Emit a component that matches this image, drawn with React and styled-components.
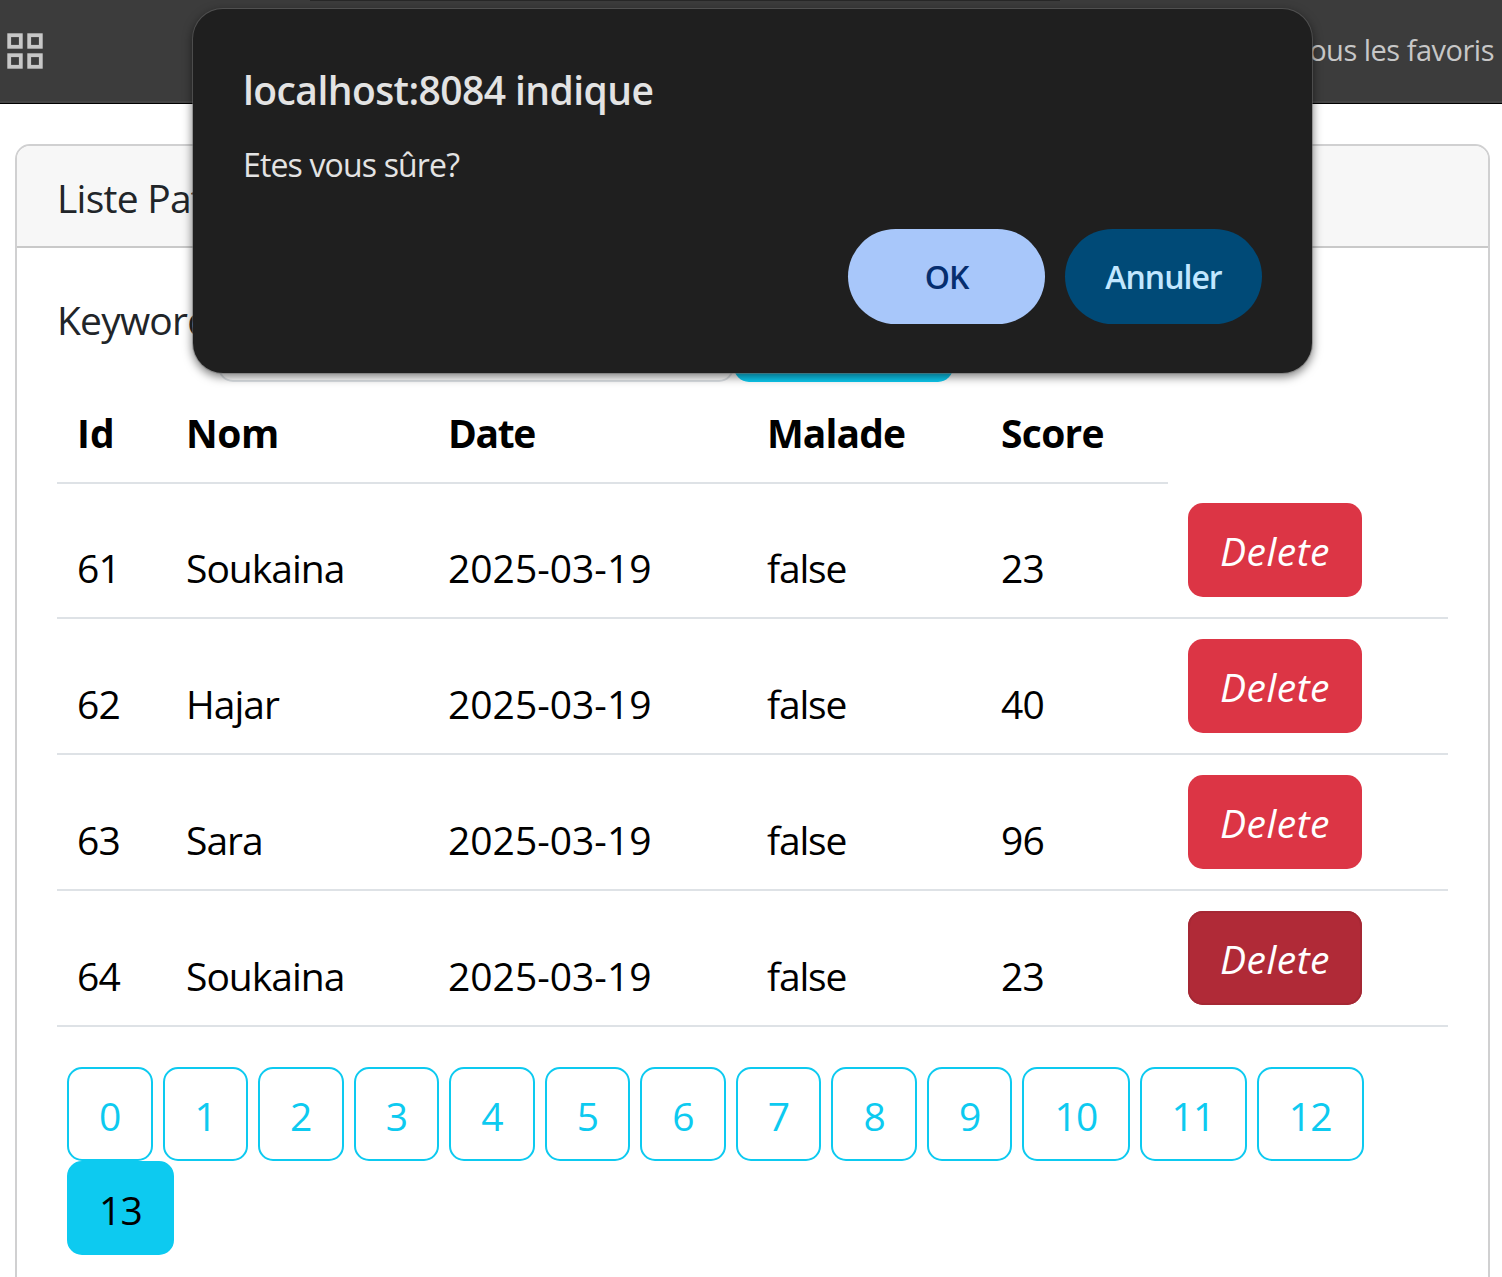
import React from 'react';
import styled, { createGlobalStyle, css } from 'styled-components';

const GlobalStyle = createGlobalStyle`
  * { box-sizing: border-box; }
  body {
    margin: 0;
    background: #fff;
    color: #212529;
    font: 400 39px/60px 'Open Sans', 'Noto Sans', sans-serif;
    overflow: hidden;
  }
`;

const Screen = styled.div`
  position: relative;
  height: 1277px;
  overflow: hidden;
  display: flex;
  flex-direction: column;
`;

const BookmarksBar = styled.header`
  position: relative;
  flex: none;
  height: 104px;
  padding: 0 8px 0 7px;
  display: flex;
  align-items: center;
  justify-content: space-between;
  background: #3c3c3c;
  border-bottom: 1px solid #000;
  box-shadow: inset 0 -2px #454545;
  color: #c7c7c7;
  font-size: 29px;
`;

const AddressBarEdge = styled.div`
  position: absolute;
  left: 310px;
  top: 0;
  width: 750px;
  height: 1px;
  background: #282828;
`;

const BookmarksLabel = styled.span`
  letter-spacing: -0.5px;
  padding-bottom: 3px;
`;

const Card = styled.main`
  flex: none;
  margin: 40px 12px 0 15px;
  height: 1200px;
  border: 2px solid #d0d0d1;
  border-radius: 15px;
  overflow: hidden;
`;

const CardHeader = styled.div`
  height: 102px;
  padding: 22px 40px 18px;
  background: #f7f7f7;
  border-bottom: 2px solid #c9c9c9;
  letter-spacing: -0.75px;
`;

const CardBody = styled.div`
  padding: 40px 40px;
`;

const SearchForm = styled.form`
  display: flex;
  height: 94px;
  margin-bottom: 2px;
`;

const SearchLabel = styled.label`
  width: 161px;
  padding-top: 2px;
  white-space: nowrap;
  letter-spacing: -0.8px;
`;

const SearchInput = styled.input`
  width: 516px;
  height: 94px;
  border: 2px solid #dee2e6;
  border-radius: 15px;
`;

const SearchButton = styled.button`
  width: 219px;
  height: 94px;
  border: 0;
  border-radius: 15px;
  background: #0dcaf0;
`;

const Table = styled.table`
  width: 1391px;
  table-layout: fixed;
  border-collapse: separate;
  border-spacing: 0;
  color: #000;
`;

const Col = styled.col`
  width: ${(p) => p.$width}px;
`;

const HeadCell = styled.th`
  height: 100px;
  padding: 1px 20px 1px;
  text-align: left;
  font-weight: 700;
  letter-spacing: ${(p) => p.$spacing || 0}px;
  border-bottom: 2px solid #dee2e6;
`;

const Row = styled.tr`
  height: 136px;
  &:first-child { height: 135px; }
`;

const Cell = styled.td`
  padding: 0 20px 19px;
  vertical-align: bottom;
  letter-spacing: ${(p) => p.$spacing || 0}px;
  border-bottom: 2px solid #dee2e6;
`;

const ActionCell = styled(Cell)`
  padding: 0 20px 20px;
`;

const DeleteButton = styled.button`
  display: block;
  width: 174px;
  height: 94px;
  padding: 2px 0 0;
  border: 0;
  border-radius: 15px;
  background: #dc3545;
  color: #fff;
  font: italic 400 39px/60px 'Open Sans', 'Noto Sans', sans-serif;
  letter-spacing: 0.5px;
  ${(p) => p.$pressed && css`
    background: #b02a37;
    box-shadow: inset 0 0 0 2px #a52834;
  `}
`;

const Pager = styled.nav`
  display: flex;
  flex-wrap: wrap;
  margin-top: 40px;
  padding-left: 10px;
  column-gap: 10px;
`;

const PageButton = styled.button`
  width: ${(p) => (p.$wide ? 107.1 : 85.55)}px;
  height: 94px;
  padding: 3px 0 0;
  border: 2px solid #0dcaf0;
  border-radius: 15px;
  background: ${(p) => (p.$active ? '#0dcaf0' : 'transparent')};
  color: ${(p) => (p.$active ? '#000' : '#0dcaf0')};
  font: 400 39px/60px 'Open Sans', 'Noto Sans', sans-serif;
  letter-spacing: -0.8px;
`;

const Dialog = styled.div`
  position: absolute;
  left: 193px;
  top: 9px;
  width: 1119px;
  height: 364px;
  padding: 51px 50px 49px;
  display: flex;
  flex-direction: column;
  background: #1f1f1f;
  border-radius: 30px;
  box-shadow: 0 0 0 1px rgba(110, 110, 110, 0.5), 0 3px 10px 1px rgba(0, 0, 0, 0.5);
  color: #e3e3e3;
`;

const DialogTitle = styled.div`
  font-weight: 600;
  font-size: 39px;
  letter-spacing: -0.57px;
`;

const DialogText = styled.div`
  margin-top: 15px;
  font-size: 32px;
  letter-spacing: -0.85px;
`;

const DialogActions = styled.div`
  margin-top: auto;
  display: flex;
  justify-content: flex-end;
  gap: 20px;
`;

const DialogButton = styled.button`
  width: 197px;
  height: 95px;
  padding: 1px 0 1px;
  border: 0;
  border-radius: 48px;
  background: ${(p) => (p.$primary ? '#a8c7fa' : '#004a77')};
  color: ${(p) => (p.$primary ? '#062e6f' : '#c2e7ff')};
  font: 600 32px/60px 'Open Sans', 'Noto Sans', sans-serif;
  letter-spacing: -1px;
`;

const AppsIcon = () => (
  <svg width="37" height="37" viewBox="0 0 37 37" fill="none" stroke="#c7c7c7" strokeWidth="3.8">
    <rect x="2.2" y="2.2" width="11.6" height="11.6" />
    <rect x="22.2" y="2.2" width="11.6" height="11.6" />
    <rect x="2.2" y="22.2" width="11.6" height="11.6" />
    <rect x="22.2" y="22.2" width="11.6" height="11.6" />
  </svg>
);

const columns = [109, 262, 319, 234, 187, 280];
const headings = [
  { label: 'Id', spacing: 0 },
  { label: 'Nom', spacing: -0.4 },
  { label: 'Date', spacing: -1.4 },
  { label: 'Malade', spacing: -0.9 },
  { label: 'Score', spacing: -0.7 },
];
const patients = [
  { id: 61, nom: 'Soukaina', date: '2025-03-19', malade: 'false', score: 23 },
  { id: 62, nom: 'Hajar', date: '2025-03-19', malade: 'false', score: 40 },
  { id: 63, nom: 'Sara', date: '2025-03-19', malade: 'false', score: 96 },
  { id: 64, nom: 'Soukaina', date: '2025-03-19', malade: 'false', score: 23 },
];
const currentPage = 13;

export default function App() {
  return (
    <Screen>
      <GlobalStyle />
      <BookmarksBar>
        <AddressBarEdge />
        <AppsIcon />
        <BookmarksLabel>Tous les favoris</BookmarksLabel>
      </BookmarksBar>
      <Card>
        <CardHeader>Liste Patients</CardHeader>
        <CardBody>
          <SearchForm>
            <SearchLabel>Keyword:</SearchLabel>
            <SearchInput />
            <SearchButton type="button" />
          </SearchForm>
          <Table>
            <colgroup>
              {columns.map((w, i) => <Col key={i} $width={w} />)}
            </colgroup>
            <thead>
              <tr>
                {headings.map((h) => (
                  <HeadCell key={h.label} $spacing={h.spacing}>{h.label}</HeadCell>
                ))}
              </tr>
            </thead>
            <tbody>
              {patients.map((p) => (
                <Row key={p.id}>
                  <Cell $spacing={-0.8}>{p.id}</Cell>
                  <Cell $spacing={-1}>{p.nom}</Cell>
                  <Cell>{p.date}</Cell>
                  <Cell $spacing={-1.2}>{p.malade}</Cell>
                  <Cell $spacing={-0.8}>{p.score}</Cell>
                  <ActionCell>
                    <DeleteButton $pressed={p.id === 64}>Delete</DeleteButton>
                  </ActionCell>
                </Row>
              ))}
            </tbody>
          </Table>
          <Pager>
            {Array.from({ length: 14 }, (_, n) => (
              <PageButton key={n} $wide={n > 9} $active={n === currentPage}>{n}</PageButton>
            ))}
          </Pager>
        </CardBody>
      </Card>
      <Dialog role="dialog">
        <DialogTitle>localhost:8084 indique</DialogTitle>
        <DialogText>Etes vous sûre?</DialogText>
        <DialogActions>
          <DialogButton $primary>OK</DialogButton>
          <DialogButton>Annuler</DialogButton>
        </DialogActions>
      </Dialog>
    </Screen>
  );
}
